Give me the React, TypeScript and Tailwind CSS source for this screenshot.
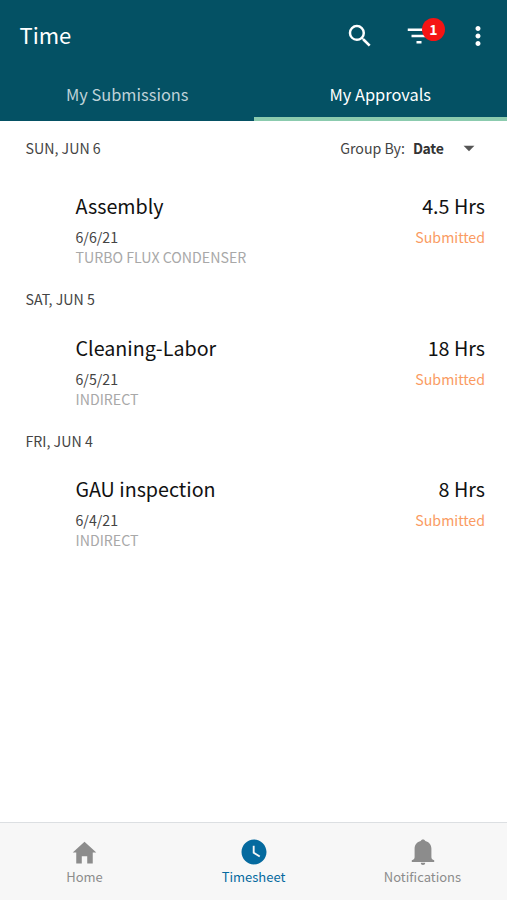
import React, { useState } from 'react';
import { MdSearch, MdFilterList, MdMoreVert, MdArrowDropDown, MdWatchLater } from 'react-icons/md';
import { IoMdHome } from 'react-icons/io';

interface Entry {
    day: string;
    title: string;
    date: string;
    project: string;
    hours: string;
    status: string;
}

const entries: Entry[] = [
    { day: 'SUN, JUN 6', title: 'Assembly', date: '6/6/21', project: 'TURBO FLUX CONDENSER', hours: '4.5 Hrs', status: 'Submitted' },
    { day: 'SAT, JUN 5', title: 'Cleaning-Labor', date: '6/5/21', project: 'INDIRECT', hours: '18 Hrs', status: 'Submitted' },
    { day: 'FRI, JUN 4', title: 'GAU inspection', date: '6/4/21', project: 'INDIRECT', hours: '8 Hrs', status: 'Submitted' },
];

const App = () => {
    const [tab, setTab] = useState('My Approvals');

    return (
        <div className="flex h-[900px] w-[507px] flex-col bg-white font-['Noto_Sans_CJK_SC',sans-serif] text-[#444]">
            <header className="bg-[#045164] text-white">
                <div className="flex h-[71px] items-center pl-[19.5px] pr-[14px]">
                    <h1 className="flex-1 pb-[3px] text-[22px] leading-7">Time</h1>
                    <button className="mr-[29px]"><MdSearch size={30} /></button>
                    <button className="relative mr-[29px]">
                        <MdFilterList size={30} />
                        <span className="absolute -top-[3px] left-[18px] flex size-[23px] items-center justify-center rounded-full bg-[#f51414] text-[14px] font-bold">1</span>
                    </button>
                    <button><MdMoreVert size={30} /></button>
                </div>
                <nav className="grid h-[50px] grid-cols-2">
                    <Tab label="My Submissions" active={tab === 'My Submissions'} onSelect={setTab} />
                    <Tab label="My Approvals" active={tab === 'My Approvals'} onSelect={setTab} />
                </nav>
            </header>
            <main className="flex-1">
                {entries.map((entry, index) => (
                    <section key={entry.day}>
                        <div className={index === 0 ? 'flex h-[59px] items-center pb-[5px] pl-[25.5px] pr-[26px]' : 'flex h-[45px] items-center pl-[25.5px]'}>
                            <h2 className="flex-1 text-[14.2px] leading-5">{entry.day}</h2>
                            {index === 0 && (
                                <button className="flex items-center text-[14.2px] leading-5">
                                    Group By: <b className="ml-2 text-[14px] tracking-[-0.3px] text-[#333]">Date</b>
                                    <MdArrowDropDown size={26} className="-mr-px ml-[12.5px] text-[#555]" />
                                </button>
                            )}
                        </div>
                        <Row entry={entry} />
                    </section>
                ))}
            </main>
            <footer className="grid h-[78px] grid-cols-3 border-t border-[#dcdfe2] bg-[#f7f7f7] text-[13px] text-[#8c8c8c]">
                <FooterItem label="Home" icon={<IoMdHome size={29} />} />
                <FooterItem label="Timesheet" icon={<MdWatchLater size={30} />} active />
                <FooterItem label="Notifications" icon={<BellIcon />} />
            </footer>
        </div>
    );
};

export default App;

function Tab({ label, active, onSelect }: { label: string, active: boolean, onSelect: (label: string) => void }) {
    return (
        <button
            onClick={() => onSelect(label)}
            className={`border-b-4 pb-px text-[16.4px] leading-6 ${active ? 'border-[#8bcbae]' : 'border-transparent pl-px text-[#bfd2d8]'}`}
        >
            {label}
        </button>
    );
}

function Row({ entry }: { entry: Entry }) {
    return (
        <div className="flex h-[96.7px] justify-between pl-[75.5px] pr-[22px] pt-3">
            <div>
                <h3 className="text-[19.7px] leading-7 text-[#111]">{entry.title}</h3>
                <p className="mt-[7px] text-[14.2px] leading-5">{entry.date}</p>
                <p className="text-[14.2px] leading-5 text-[#a8a8a8]">{entry.project}</p>
            </div>
            <div className="text-right">
                <p className="text-[19.7px] leading-7 text-[#111]">{entry.hours}</p>
                <p className="mt-[7px] text-[14.2px] leading-5 text-[#fa9b62]">{entry.status}</p>
            </div>
        </div>
    );
}

function FooterItem({ label, icon, active }: { label: string, icon: React.ReactNode, active?: boolean }) {
    return (
        <button className={`flex flex-col items-center pt-[15px] ${active ? 'text-[#056a9f]' : ''}`}>
            <span className="flex h-7 items-center">{icon}</span>
            <span className="mt-px leading-5">{label}</span>
        </button>
    );
}

function BellIcon() {
    return (
        <svg width="24" height="26" viewBox="0 0 24 26" fill="currentColor">
            <path d="M12 0.5c1.200 0 2 .6 2.300 1.500C18 2.900 20.400 5.800 20.400 9.600v8.300c0 1.800.8 2.700 2.800 3.400v1.600H.8v-1.600c2-.7 2.800-1.600 2.800-3.400V9.600C3.600 5.800 6 2.900 9.700 2 10 1.100 10.800.5 12 .5z" />
            <path d="M9.800 23.800h4.400c0 1.400-.9 2.200-2.200 2.200s-2.200-.8-2.200-2.200z" />
        </svg>
    );
}
